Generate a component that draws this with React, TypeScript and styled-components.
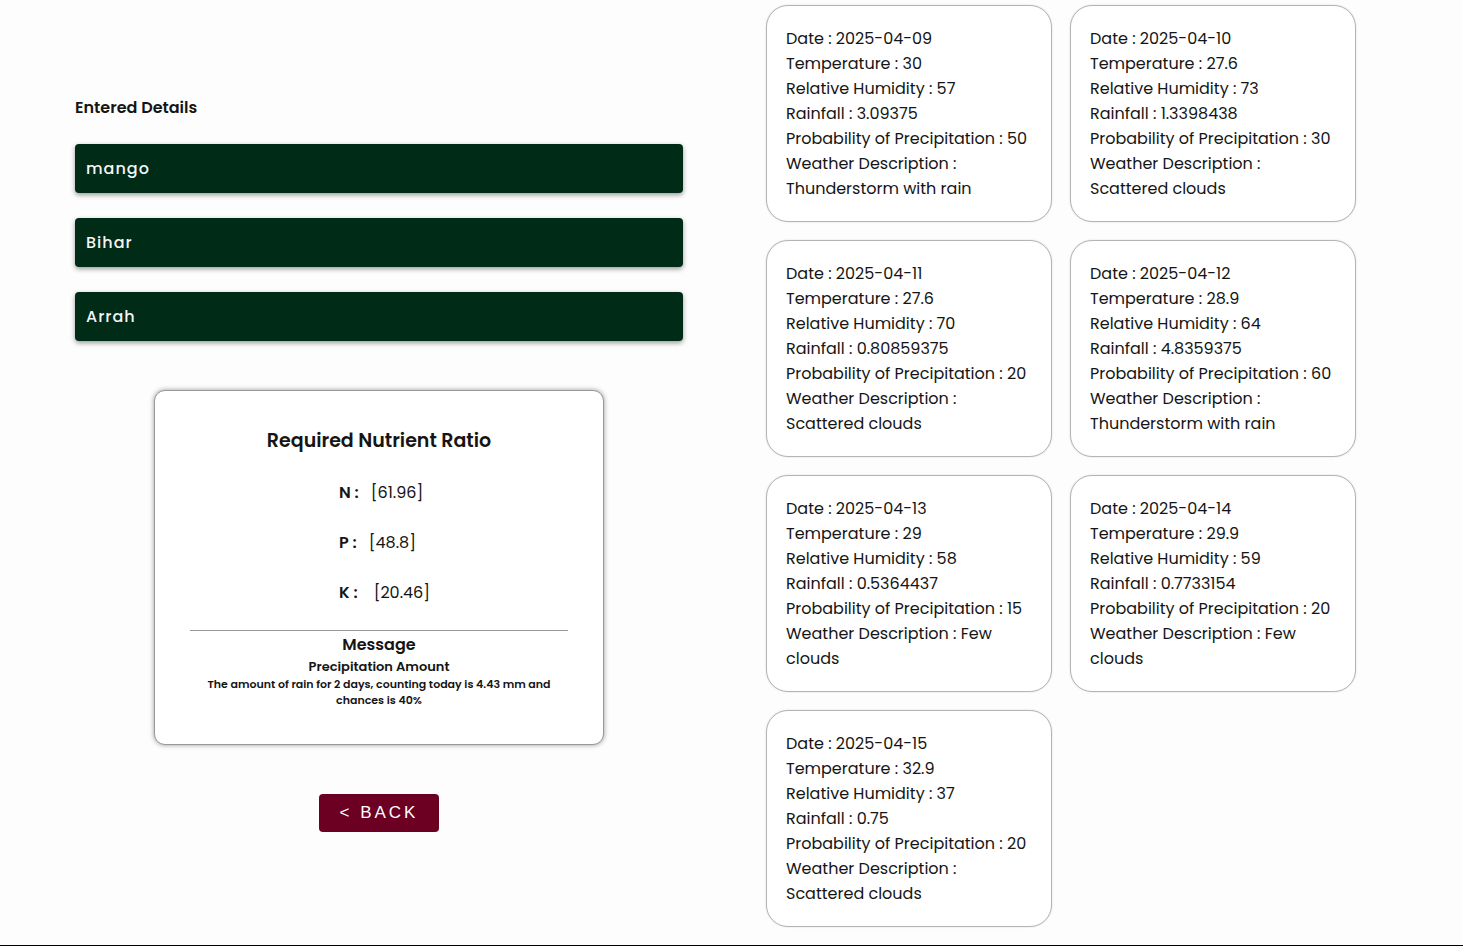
import React from "react";
import styled, { createGlobalStyle } from "styled-components";

const GlobalStyle = createGlobalStyle`
  *, *::before, *::after { box-sizing: border-box; }
  body {
    margin: 0;
    background: #fdfdfd;
    color: #151515;
    font-family: Poppins, Inter, sans-serif;
    font-size: 16px;
    line-height: 25px;
  }
  h1, h2, h3, h4, p, ul, dl, dd { margin: 0; padding: 0; }
  ul { list-style: none; }
`;

const Page = styled.main`
  display: grid;
  grid-template-columns: 608fr 590fr;
  column-gap: 83px;
  align-items: start;
  padding: 5px 107px 18px 75px;
`;

const Summary = styled.section`
  display: flex;
  flex-direction: column;
  align-items: center;
  padding-top: 91px;
`;

const Heading = styled.h1`
  align-self: stretch;
  font-size: 16px;
  font-weight: 600;
  line-height: 24px;
`;

const Details = styled.ul`
  align-self: stretch;
  display: grid;
  gap: 25px;
  margin-top: 24px;
`;

const Detail = styled.li`
  padding: 12px 11px;
  border-radius: 4px;
  background: #002b16;
  box-shadow: 0 2px 5px rgba(0, 0, 0, 0.4);
  color: #f5f5f5;
  font-weight: 500;
  letter-spacing: 1px;
`;

const NutrientCard = styled.section`
  width: 100%;
  max-width: 450px;
  margin-top: 49px;
  padding: 36px 35px 35px;
  border: 1px solid #999;
  border-radius: 11px;
  background: #fff;
  box-shadow: 0 0 5px rgba(0, 0, 0, 0.4);
  text-align: center;
`;

const CardTitle = styled.h2`
  font-size: 19px;
  font-weight: 600;
  line-height: 28px;
`;

const Ratios = styled.dl`
  width: 80px;
  margin: 25px auto;
  display: grid;
  gap: 25px;
  white-space: nowrap;
`;

const Ratio = styled.div<{ $gap: number }>`
  display: flex;
  gap: ${({ $gap }) => $gap}px;
`;

const Nutrient = styled.dt`
  font-size: 16px;
  font-weight: 600;
`;

const Amount = styled.dd`
  font-size: 16px;
  font-weight: 400;
`;

const Divider = styled.hr`
  margin: 0;
  border: 0;
  border-top: 1px solid #999;
`;

const MessageTitle = styled.h3`
  padding-top: 1px;
  font-size: 16px;
  font-weight: 600;
  line-height: 26px;
`;

const MessageSubject = styled.h4`
  font-size: 13px;
  font-weight: 600;
  line-height: 18px;
`;

const MessageText = styled.p`
  padding: 0 16px 1px;
  font-size: 11px;
  font-weight: 600;
  line-height: 16px;
`;

const BackButton = styled.button`
  height: 38px;
  margin-top: 49px;
  padding: 0 21px;
  border: 0;
  border-radius: 4px;
  background: #6b0023;
  color: #fff;
  font: 400 17px "Liberation Sans", Arial, sans-serif;
  letter-spacing: 3px;
  cursor: pointer;
`;

const Forecasts = styled.section`
  display: grid;
  grid-template-columns: repeat(2, 1fr);
  gap: 18px;
`;

const ForecastCard = styled.article`
  padding: 20px 19px;
  border: 1px solid #b4b4b4;
  border-radius: 22px;
  background: #fff;
  box-shadow: 0 0 2px rgba(0, 0, 0, 0.15);
`;

const ratios = [
  { name: "N", value: "[61.96]", gap: 12 },
  { name: "P", value: "[48.8]", gap: 12 },
  { name: "K", value: "[20.46]", gap: 16 },
];

const forecasts = [
  { date: "2025-04-09", temp: 30, humidity: 57, rain: 3.09375, chance: 50, sky: "Thunderstorm with rain" },
  { date: "2025-04-10", temp: 27.6, humidity: 73, rain: 1.3398438, chance: 30, sky: "Scattered clouds" },
  { date: "2025-04-11", temp: 27.6, humidity: 70, rain: 0.80859375, chance: 20, sky: "Scattered clouds" },
  { date: "2025-04-12", temp: 28.9, humidity: 64, rain: 4.8359375, chance: 60, sky: "Thunderstorm with rain" },
  { date: "2025-04-13", temp: 29, humidity: 58, rain: 0.5364437, chance: 15, sky: "Few clouds" },
  { date: "2025-04-14", temp: 29.9, humidity: 59, rain: 0.7733154, chance: 20, sky: "Few clouds" },
  { date: "2025-04-15", temp: 32.9, humidity: 37, rain: 0.75, chance: 20, sky: "Scattered clouds" },
];

const Footer = styled.footer`
  border-top: 1px solid #000;
`;

export default function App() {
  return (
    <>
      <GlobalStyle />
      <Page>
        <Summary>
          <Heading>Entered Details</Heading>
          <Details>
            {["mango", "Bihar", "Arrah"].map((d) => (
              <Detail key={d}>{d}</Detail>
            ))}
          </Details>
          <NutrientCard>
            <CardTitle>Required Nutrient Ratio</CardTitle>
            <Ratios>
              {ratios.map((r) => (
                <Ratio key={r.name} $gap={r.gap}>
                  <Nutrient>{r.name} :</Nutrient>
                  <Amount>{r.value}</Amount>
                </Ratio>
              ))}
            </Ratios>
            <Divider />
            <MessageTitle>Message</MessageTitle>
            <MessageSubject>Precipitation Amount</MessageSubject>
            <MessageText>
              The amount of rain for 2 days, counting today is 4.43 mm and chances is 40%
            </MessageText>
          </NutrientCard>
          <BackButton type="button">&lt; BACK</BackButton>
        </Summary>
        <Forecasts>
          {forecasts.map((f) => (
            <ForecastCard key={f.date}>
              <p>Date : {f.date}</p>
              <p>Temperature : {f.temp}</p>
              <p>Relative Humidity : {f.humidity}</p>
              <p>Rainfall : {f.rain}</p>
              <p>Probability of Precipitation : {f.chance}</p>
              <p>Weather Description : {f.sky}</p>
            </ForecastCard>
          ))}
        </Forecasts>
      </Page>
      <Footer />
    </>
  );
}
